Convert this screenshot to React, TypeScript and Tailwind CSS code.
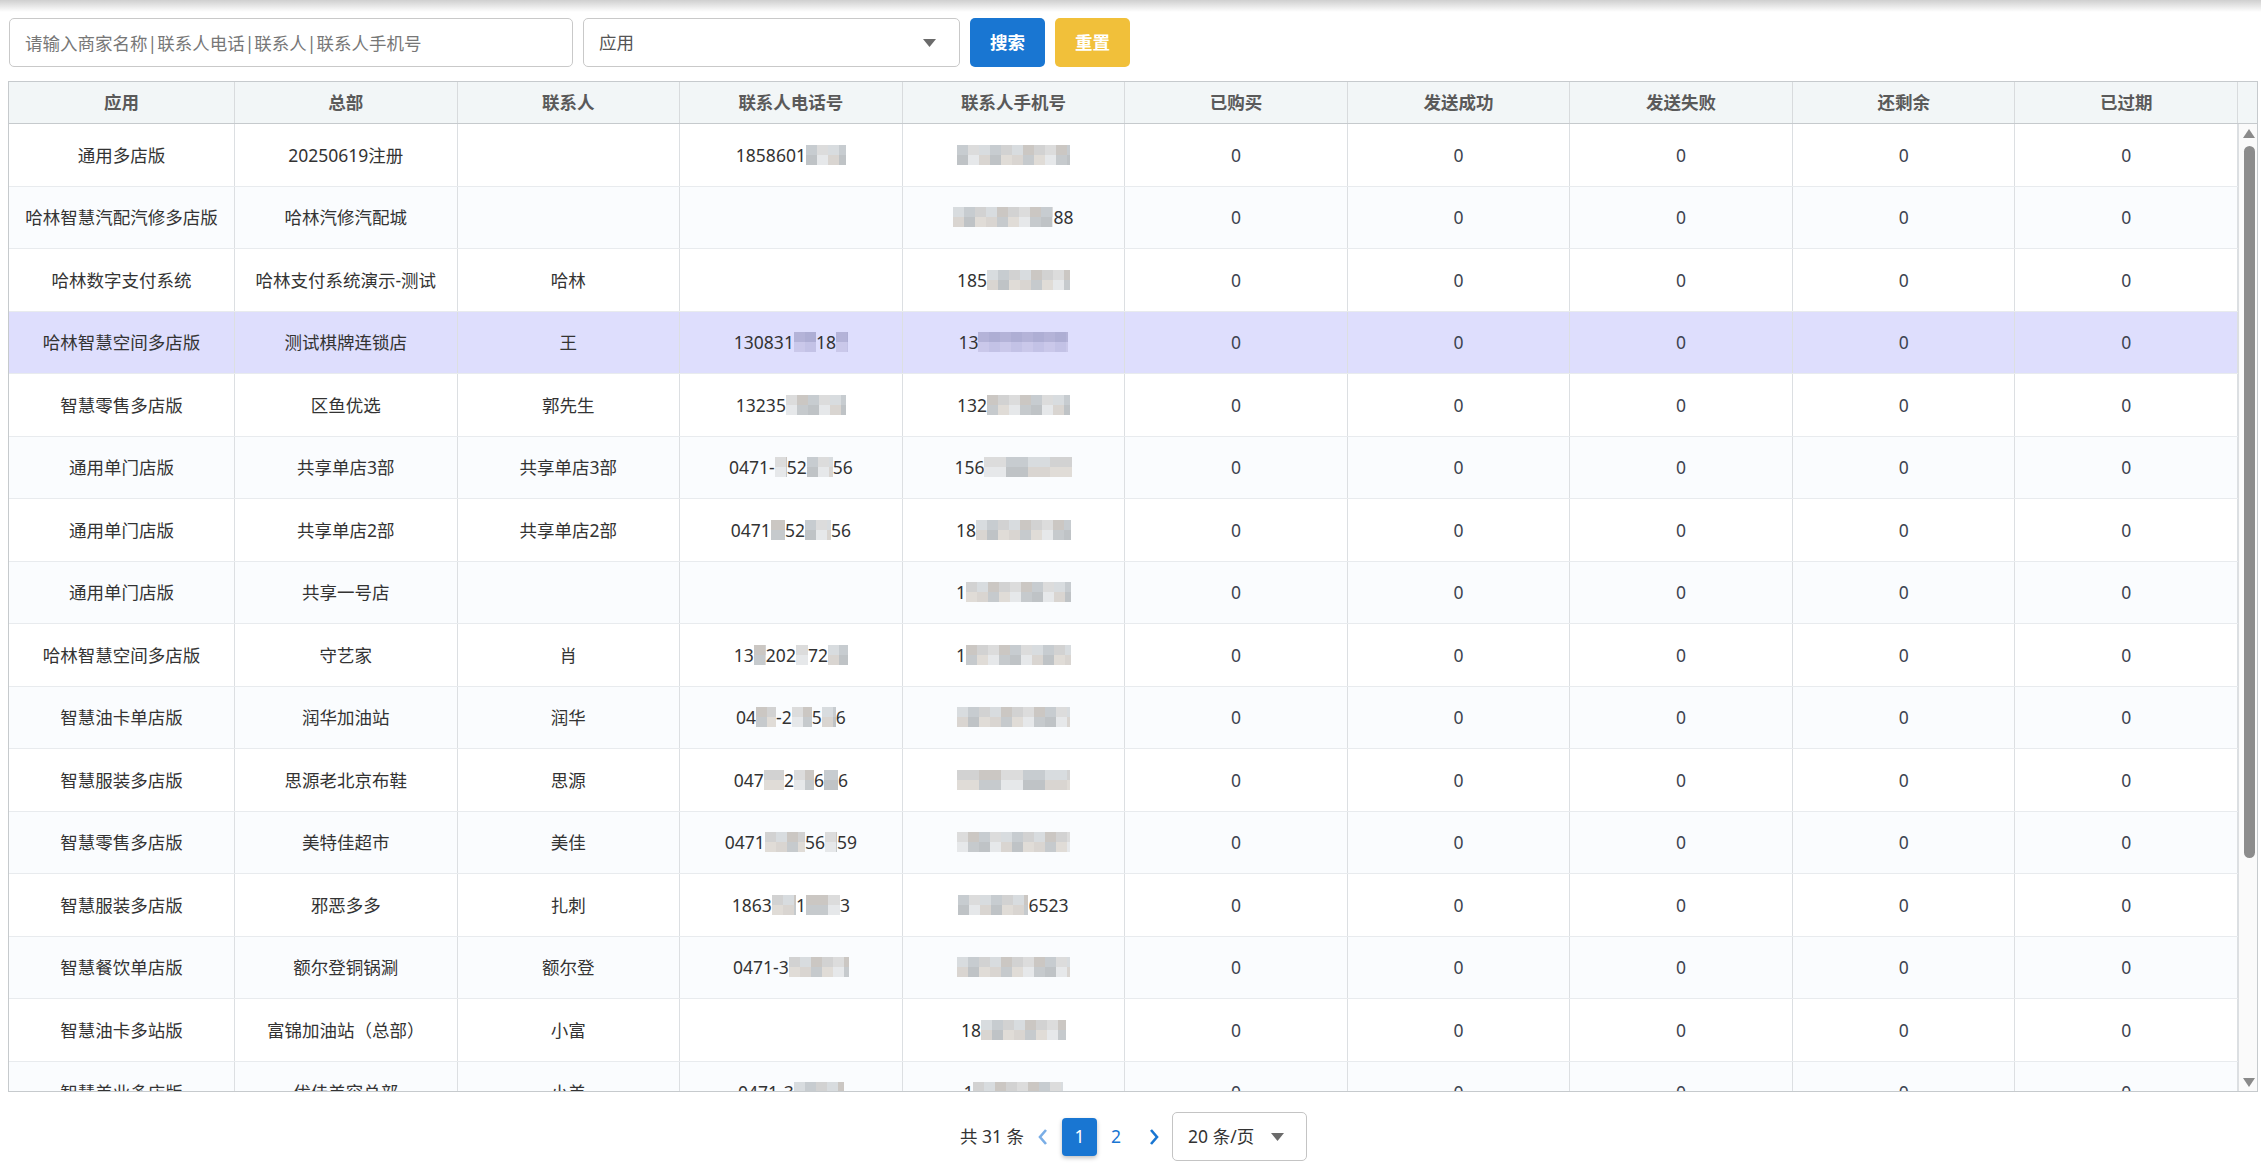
import React from "react";

type Seg = string | number;

const GRAY = ["#d2d2d2", "#c6cacd", "#dcdcdc", "#bfc3c6", "#d8dcdf", "#e0dcd7", "#cbc7c3", "#e6e8ea", "#c7ccd0", "#d9d5d1"];
const PURP = ["#b4b3d8", "#bebde2", "#b8b8dc", "#c3c2e6", "#aeaed4", "#cac8ea"];

function Mosaic({ w, seed, tint }: { w: number; seed: number; tint?: boolean }) {
  const pal = tint ? PURP : GRAY;
  const cell = 11;
  const cols = Math.max(1, Math.ceil(w / cell));
  const rects: React.ReactNode[] = [];
  for (let r = 0; r < 2; r++) {
    for (let c = 0; c < cols; c++) {
      const idx = (seed * 7 + r * 5 + c * 3 + ((c * c + seed) % 4)) % pal.length;
      rects.push(<rect key={r + "-" + c} x={c * cell} y={r * 10} width={cell} height={10} fill={pal[idx]} />);
    }
  }
  return (
    <svg width={w} height={20} viewBox={`0 0 ${w} 20`} className="inline-block shrink-0">
      {rects}
    </svg>
  );
}

function Masked({ segs, seed, tint }: { segs: Seg[]; seed: number; tint?: boolean }) {
  return (
    <span className="inline-flex items-center">
      {segs.map((s, i) =>
        typeof s === "number" ? <Mosaic key={i} w={s} seed={seed + i} tint={tint} /> : <span key={i}>{s}</span>
      )}
    </span>
  );
}

type Row = { app: string; hq: string; person: string; tel: Seg[]; mob: Seg[] };

const rows: Row[] = [
  { app: "通用多店版", hq: "20250619注册", person: "", tel: ["1858601", 40], mob: [113] },
  { app: "哈林智慧汽配汽修多店版", hq: "哈林汽修汽配城", person: "", tel: [], mob: [100, "88"] },
  { app: "哈林数字支付系统", hq: "哈林支付系统演示-测试", person: "哈林", tel: [], mob: ["185", 83] },
  { app: "哈林智慧空间多店版", hq: "测试棋牌连锁店", person: "王", tel: ["130831", 22, "18", 12], mob: ["13", 90] },
  { app: "智慧零售多店版", hq: "区鱼优选", person: "郭先生", tel: ["13235", 60], mob: ["132", 83] },
  { app: "通用单门店版", hq: "共享单店3部", person: "共享单店3部", tel: ["0471-", 12, "52", 26, "56"], mob: ["156", 88] },
  { app: "通用单门店版", hq: "共享单店2部", person: "共享单店2部", tel: ["0471", 14, "52", 26, "56"], mob: ["18", 95] },
  { app: "通用单门店版", hq: "共享一号店", person: "", tel: [], mob: ["1", 105] },
  { app: "哈林智慧空间多店版", hq: "守艺家", person: "肖", tel: ["13", 12, "202", 12, "72", 20], mob: ["1", 105] },
  { app: "智慧油卡单店版", hq: "润华加油站", person: "润华", tel: ["04", 20, "-2", 20, "5", 14, "6"], mob: [113] },
  { app: "智慧服装多店版", hq: "思源老北京布鞋", person: "思源", tel: ["047", 20, "2", 20, "6", 14, "6"], mob: [113] },
  { app: "智慧零售多店版", hq: "美特佳超市", person: "美佳", tel: ["0471", 40, "56", 12, "59"], mob: [113] },
  { app: "智慧服装多店版", hq: "邪恶多多", person: "扎刺", tel: ["1863", 24, "1", 34, "3"], mob: [70, "6523"] },
  { app: "智慧餐饮单店版", hq: "额尔登铜锅涮", person: "额尔登", tel: ["0471-3", 60], mob: [113] },
  { app: "智慧油卡多站版", hq: "富锦加油站（总部）", person: "小富", tel: [], mob: ["18", 85] },
  { app: "智慧美业多店版", hq: "优佳美容总部", person: "小美", tel: ["0471-3", 50], mob: ["1", 90] },
];

const headers = ["应用", "总部", "联系人", "联系人电话号", "联系人手机号", "已购买", "发送成功", "发送失败", "还剩余", "已过期"];

function Tri({ className }: { className?: string }) {
  return (
    <svg width="13" height="8" viewBox="0 0 13 8" className={className}>
      <path d="M0 0 L13 0 L6.5 8 Z" fill="#6b6b6b" />
    </svg>
  );
}

export default function App() {
  return (
    <div className="w-[2261px] h-[1164px] bg-white overflow-hidden text-[17.5px] text-[#333] font-['Noto_Sans','Noto_Sans_CJK_SC',sans-serif]">
      <div className="h-[12px] bg-gradient-to-b from-[#cfcfcf] to-white" />
      {/* filter bar */}
      <div className="flex gap-[10px] pl-[9px] pt-[6px]">
        <input
          className="w-[564px] h-[49px] border border-[#c9c9c9] rounded-[5px] px-[15px] outline-none placeholder:text-[#777] text-[17.5px]"
          placeholder="请输入商家名称|联系人电话|联系人|联系人手机号"
        />
        <div className="w-[377px] h-[49px] border border-[#c9c9c9] rounded-[5px] pl-[15px] pr-[23px] flex items-center justify-between text-[#555]">
          <span>应用</span>
          <Tri />
        </div>
        <button className="w-[75px] h-[49px] rounded-[5px] bg-[#1976d2] text-white font-bold">搜索</button>
        <button className="w-[75px] h-[49px] rounded-[5px] bg-[#f1c03a] text-white font-bold">重置</button>
      </div>

      {/* table */}
      <div className="mt-[14px] ml-[8px] w-[2250px] h-[1011px] border border-[#c6cacd] flex flex-col overflow-hidden">
        <div className="flex h-[42px] shrink-0 bg-[#f2f6f7] border-b border-[#c6cacd]">
          <div className="flex-1 grid grid-cols-[226px_repeat(9,1fr)]">
            {headers.map((h) => (
              <div
                key={h}
                className="flex items-center justify-center font-bold text-[#5a5a5a] border-r border-[#d8dbdd]"
              >
                {h}
              </div>
            ))}
          </div>
          <div className="w-[19px] shrink-0" />
        </div>
        <div className="flex flex-1 min-h-0">
          <div className="flex-1 overflow-hidden">
            {rows.map((r, i) => {
              const hl = i === 3;
              const bg = hl ? "bg-[#dedefd]" : i % 2 === 1 ? "bg-[#fafcfe]" : "bg-white";
              return (
                <div key={i} className={`grid grid-cols-[226px_repeat(9,1fr)] h-[62.5px] border-b border-[#e8ebee] ${bg}`}>
                  <div className="flex items-center justify-center border-r border-[#dcdfe2] whitespace-nowrap">{r.app}</div>
                  <div className="flex items-center justify-center border-r border-[#dcdfe2] whitespace-nowrap">{r.hq}</div>
                  <div className="flex items-center justify-center border-r border-[#dcdfe2] whitespace-nowrap">{r.person}</div>
                  <div className="flex items-center justify-center border-r border-[#dcdfe2] whitespace-nowrap">
                    {r.tel.length > 0 && <Masked segs={r.tel} seed={i * 3} tint={hl} />}
                  </div>
                  <div className="flex items-center justify-center border-r border-[#dcdfe2] whitespace-nowrap">
                    <Masked segs={r.mob} seed={i * 5 + 1} tint={hl} />
                  </div>
                  {[0, 1, 2, 3, 4].map((k) => (
                    <div key={k} className="flex items-center justify-center border-r border-[#dcdfe2] text-[#3d4350]">
                      0
                    </div>
                  ))}
                </div>
              );
            })}
          </div>
          {/* scrollbar */}
          <div className="w-[19px] shrink-0 border-l border-[#dcdfe2] bg-[#fafafa] flex flex-col items-center pl-[2px] pt-[5px] pb-[4px]">
            <svg width="12" height="9" viewBox="0 0 12 9" className="shrink-0">
              <path d="M0 9 L12 9 L6 0 Z" fill="#8a8a8a" />
            </svg>
            <div className="mt-[8px] w-[11px] h-[712px] rounded-full bg-[#8c8c8c] shrink-0" />
            <div className="flex-1" />
            <svg width="12" height="9" viewBox="0 0 12 9" className="shrink-0">
              <path d="M0 0 L12 0 L6 9 Z" fill="#8a8a8a" />
            </svg>
          </div>
        </div>
      </div>

      {/* pagination */}
      <div className="flex justify-center items-center mt-[20px] pl-[6px]">
        <span className="mr-[12px]">共 31 条</span>
        <svg width="14" height="18" viewBox="0 0 14 18" className="mr-[12px]">
          <path d="M10 2 L4 9 L10 16" stroke="#7aaee6" strokeWidth="2.6" fill="none" />
        </svg>
        <div className="w-[35px] h-[38px] rounded-[4px] bg-[#1976d2] text-white flex items-center justify-center shadow-[0_2px_4px_rgba(0,0,0,0.25)]">
          1
        </div>
        <div className="w-[38px] h-[38px] flex items-center justify-center text-[#1976d2]">2</div>
        <svg width="14" height="18" viewBox="0 0 14 18" className="ml-[12px] mr-[11px]">
          <path d="M4 2 L10 9 L4 16" stroke="#1976d2" strokeWidth="2.6" fill="none" />
        </svg>
        <div className="w-[135px] h-[49px] border border-[#c4c4c4] rounded-[5px] flex items-center justify-between pl-[15px] pr-[22px]">
          <span>20 条/页</span>
          <Tri />
        </div>
      </div>
    </div>
  );
}
